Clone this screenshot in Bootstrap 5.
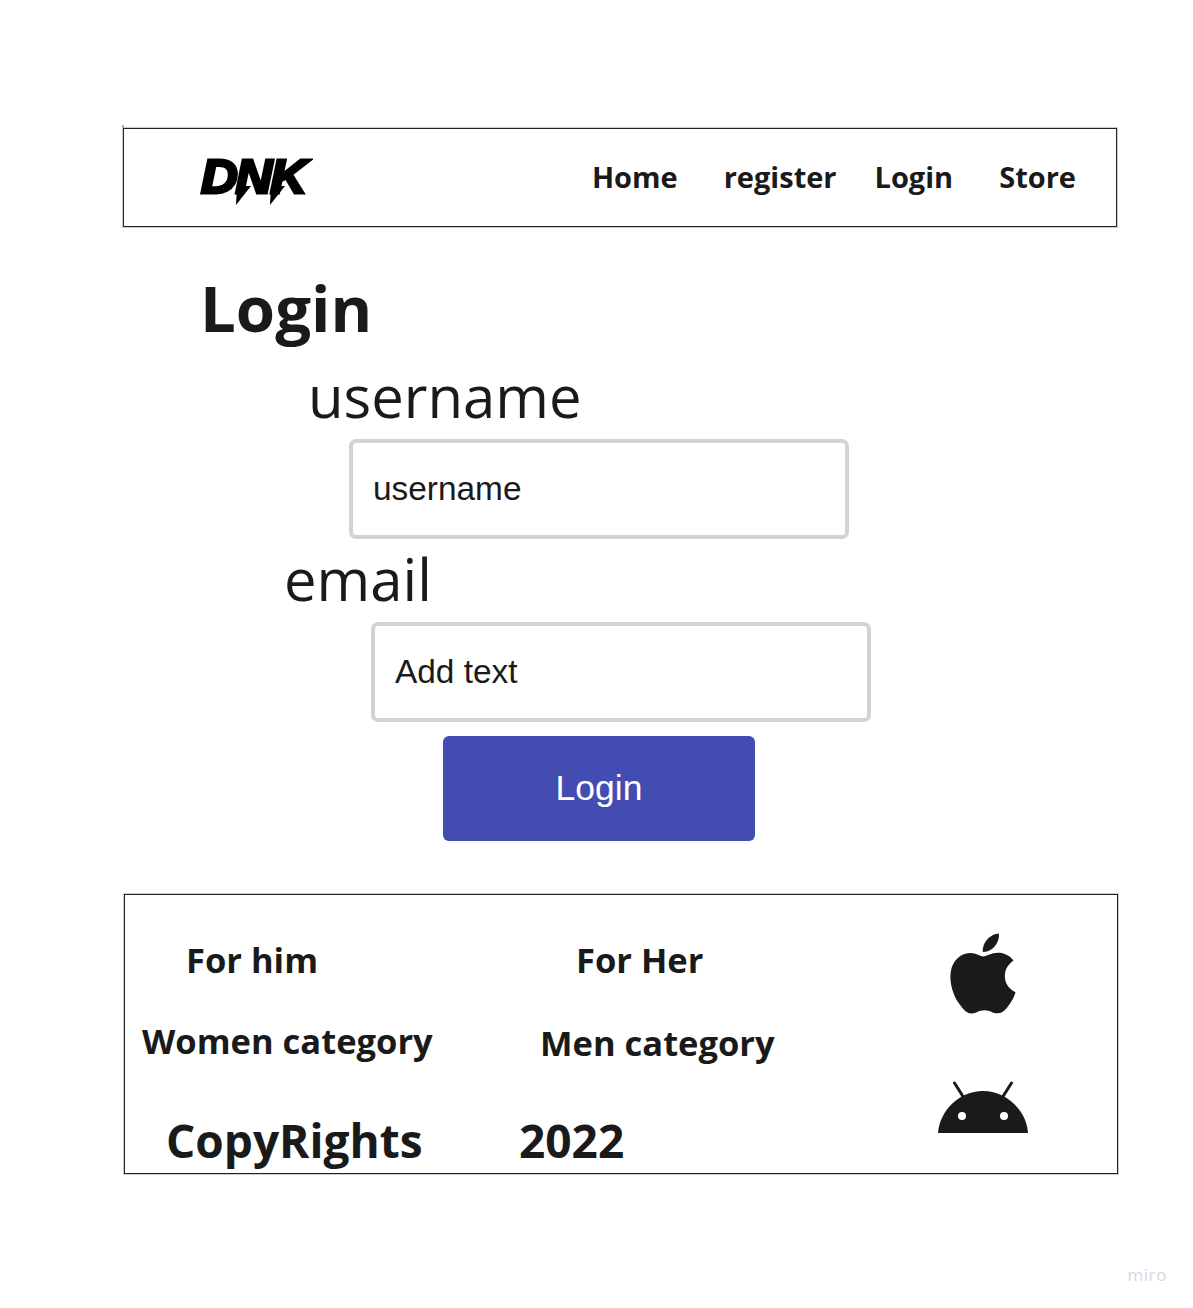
<!DOCTYPE html>
<html lang="en">
<head>
  <meta charset="UTF-8" />
  <title>Login</title>
  <link href="https://cdn.jsdelivr.net/npm/bootstrap@5.3.3/dist/css/bootstrap.min.css" rel="stylesheet" />
  <style>
    body { background: #fff; color: #1a1a1a; font-family: "Open Sans", sans-serif; }
    .board { width: 1193px; height: 1308px; padding-top: 128px; overflow: hidden; }

    .top-frame { width: 994px; height: 99px; margin-left: 123px; border: 1px solid #222; box-shadow: 0 0 0 1px rgba(0,0,0,.2); position: relative; }
    .top-frame::before { content: ""; position: absolute; left: -2px; top: -4px; width: 2px; height: 3px; background: #aaa; }
    .brand-mark { margin-left: 77px; margin-top: 23px; width: 116px; height: 60px; position: relative; }
    .brand-text { font: italic 700 48px/50px "Liberation Sans", sans-serif; color: #000; -webkit-text-stroke: 3px #000; letter-spacing: -2px; display: block; transform: scaleX(1.06); transform-origin: left; }
    .brand-spikes { position: absolute; left: 0; top: 0; }
    .top-link { font-size: 29px; font-weight: 700; line-height: 40px; color: #1a1a1a; text-decoration: none; }
    .top-links { margin-top: 28px; margin-right: 40px; }
    .link-home { margin-right: 46px; }
    .link-register { margin-right: 38px; }
    .link-login { margin-right: 46px; }

    .page-title { font-size: 63.5px; font-weight: 700; line-height: 88px; margin: 37px 0 0 200px; color: #1a1a1a; }
    .field-label { font-size: 58px; font-weight: 400; line-height: 80px; display: block; }
    .label-user { margin: 4px 0 3px 308px; }
    .label-email { margin: 0 0 3px 284px; }
    .field-input.form-control { width: 500px; height: 100px; border: 4px solid #d3d3d3; border-radius: 7px; padding: 0 20px; font: 33.4px "Liberation Sans", sans-serif; color: #1a1a1a; box-shadow: none; }
    .field-input.form-control::placeholder { color: #1a1a1a; opacity: 1; }
    .input-user { margin: 0 0 0 349px; }
    .input-email { margin: 0 0 0 371px; }
    .submit-btn.btn { display: block; width: 312px; height: 105px; margin: 14px 0 0 443px; background: #434cb0; border: 0; border-radius: 6px; color: #fff; font: 35.5px "Liberation Sans", sans-serif; }

    .bottom-frame { width: 994px; height: 280px; margin: 53px 0 0 124px; border: 1px solid #222; box-shadow: 0 0 0 1px rgba(0,0,0,.2); overflow: hidden; }
    .foot-text { font-weight: 700; font-size: 34.5px; line-height: 44px; margin: 0; white-space: nowrap; }
    .foot-col-a { width: 398px; }
    .foot-col-b { width: 410px; }
    .foot-big { font-size: 46px; line-height: 60px; font-weight: 700; }
    .foot-him { margin: 43px 0 0 61px; }
    .foot-women { margin: 37px 0 0 17px; }
    .foot-her { margin: 43px 0 0 53px; }
    .foot-men { margin: 39px 0 0 17px; }
    .foot-copy { margin: 47px 0 0 41px; }
    .foot-year { margin: 45px 0 0 -4px; }
    .foot-icons { padding-top: 38px; }
    .icon-apple { margin-left: 10px; display: block; }
    .icon-android { margin-left: 5px; margin-top: 67px; display: block; }

    .miro-tag { font-size: 17px; line-height: 20px; letter-spacing: .6px; color: #d6d6e2; text-align: right; margin: 91px 26px 0 0; }
  </style>
</head>
<body>
  <div class="board">
    <nav class="top-frame d-flex justify-content-between align-items-start">
      <a class="brand-mark d-block text-decoration-none" href="#">
        <span class="brand-text">DNK</span>
        <svg class="brand-spikes" width="116" height="60" viewBox="0 0 116 60">
          <path d="M36 34 L50 34 L35 53 Z" fill="#000"/>
          <path d="M70 34 L84 34 L69 53 Z" fill="#000"/>
        </svg>
      </a>
      <div class="top-links d-flex">
        <a class="top-link link-home" href="#">Home</a>
        <a class="top-link link-register" href="#">register</a>
        <a class="top-link link-login" href="#">Login</a>
        <a class="top-link" href="#">Store</a>
      </div>
    </nav>

    <form>
      <h1 class="page-title">Login</h1>
      <label class="field-label label-user" for="username">username</label>
      <input class="form-control field-input input-user" id="username" type="text" placeholder="username" />
      <label class="field-label label-email" for="email">email</label>
      <input class="form-control field-input input-email" id="email" type="text" placeholder="Add text" />
      <button class="btn submit-btn" type="button">Login</button>
    </form>

    <footer class="bottom-frame d-flex">
      <div class="foot-col-a">
        <p class="foot-text foot-him">For him</p>
        <p class="foot-text foot-women">Women category</p>
        <p class="foot-text foot-big foot-copy">CopyRights</p>
      </div>
      <div class="foot-col-b">
        <p class="foot-text foot-her">For Her</p>
        <p class="foot-text foot-men">Men category</p>
        <p class="foot-text foot-big foot-year">2022</p>
      </div>
      <div class="foot-icons">
        <svg class="icon-apple" width="80" height="81" viewBox="0 0 24 24" fill="#1a1a1a">
          <path d="M12.152 6.896c-.948 0-2.415-1.078-3.96-1.04-2.04.027-3.91 1.183-4.961 3.014-2.117 3.675-.546 9.103 1.519 12.09 1.013 1.454 2.208 3.09 3.792 3.039 1.52-.065 2.09-.987 3.935-.987 1.831 0 2.35.987 3.96.948 1.637-.026 2.676-1.48 3.676-2.948 1.156-1.688 1.636-3.325 1.662-3.415-.039-.013-3.182-1.221-3.22-4.857-.026-3.04 2.48-4.494 2.597-4.559-1.429-2.09-3.623-2.324-4.39-2.376-2-.156-3.675 1.09-4.61 1.09zM15.53 3.83c.843-1.012 1.4-2.427 1.245-3.83-1.207.052-2.662.805-3.532 1.818-.78.896-1.454 2.338-1.273 3.714 1.338.104 2.715-.688 3.559-1.701"/>
        </svg>
        <svg class="icon-android" width="90" height="52" viewBox="0 0 90 52">
          <path d="M0 52 C1.5 30 21 10 45 10 C69 10 88.5 30 90 52 Z" fill="#1a1a1a"/>
          <path d="M16.5 2 L26 17 M73.5 2 L64 17" stroke="#1a1a1a" stroke-width="3" stroke-linecap="round" fill="none"/>
          <circle cx="24" cy="35" r="4" fill="#fff"/>
          <circle cx="66" cy="35" r="4" fill="#fff"/>
        </svg>
      </div>
    </footer>

    <div class="miro-tag">miro</div>
  </div>
  <script src="https://cdn.jsdelivr.net/npm/bootstrap@5.3.3/dist/js/bootstrap.bundle.min.js"></script>
</body>
</html>
